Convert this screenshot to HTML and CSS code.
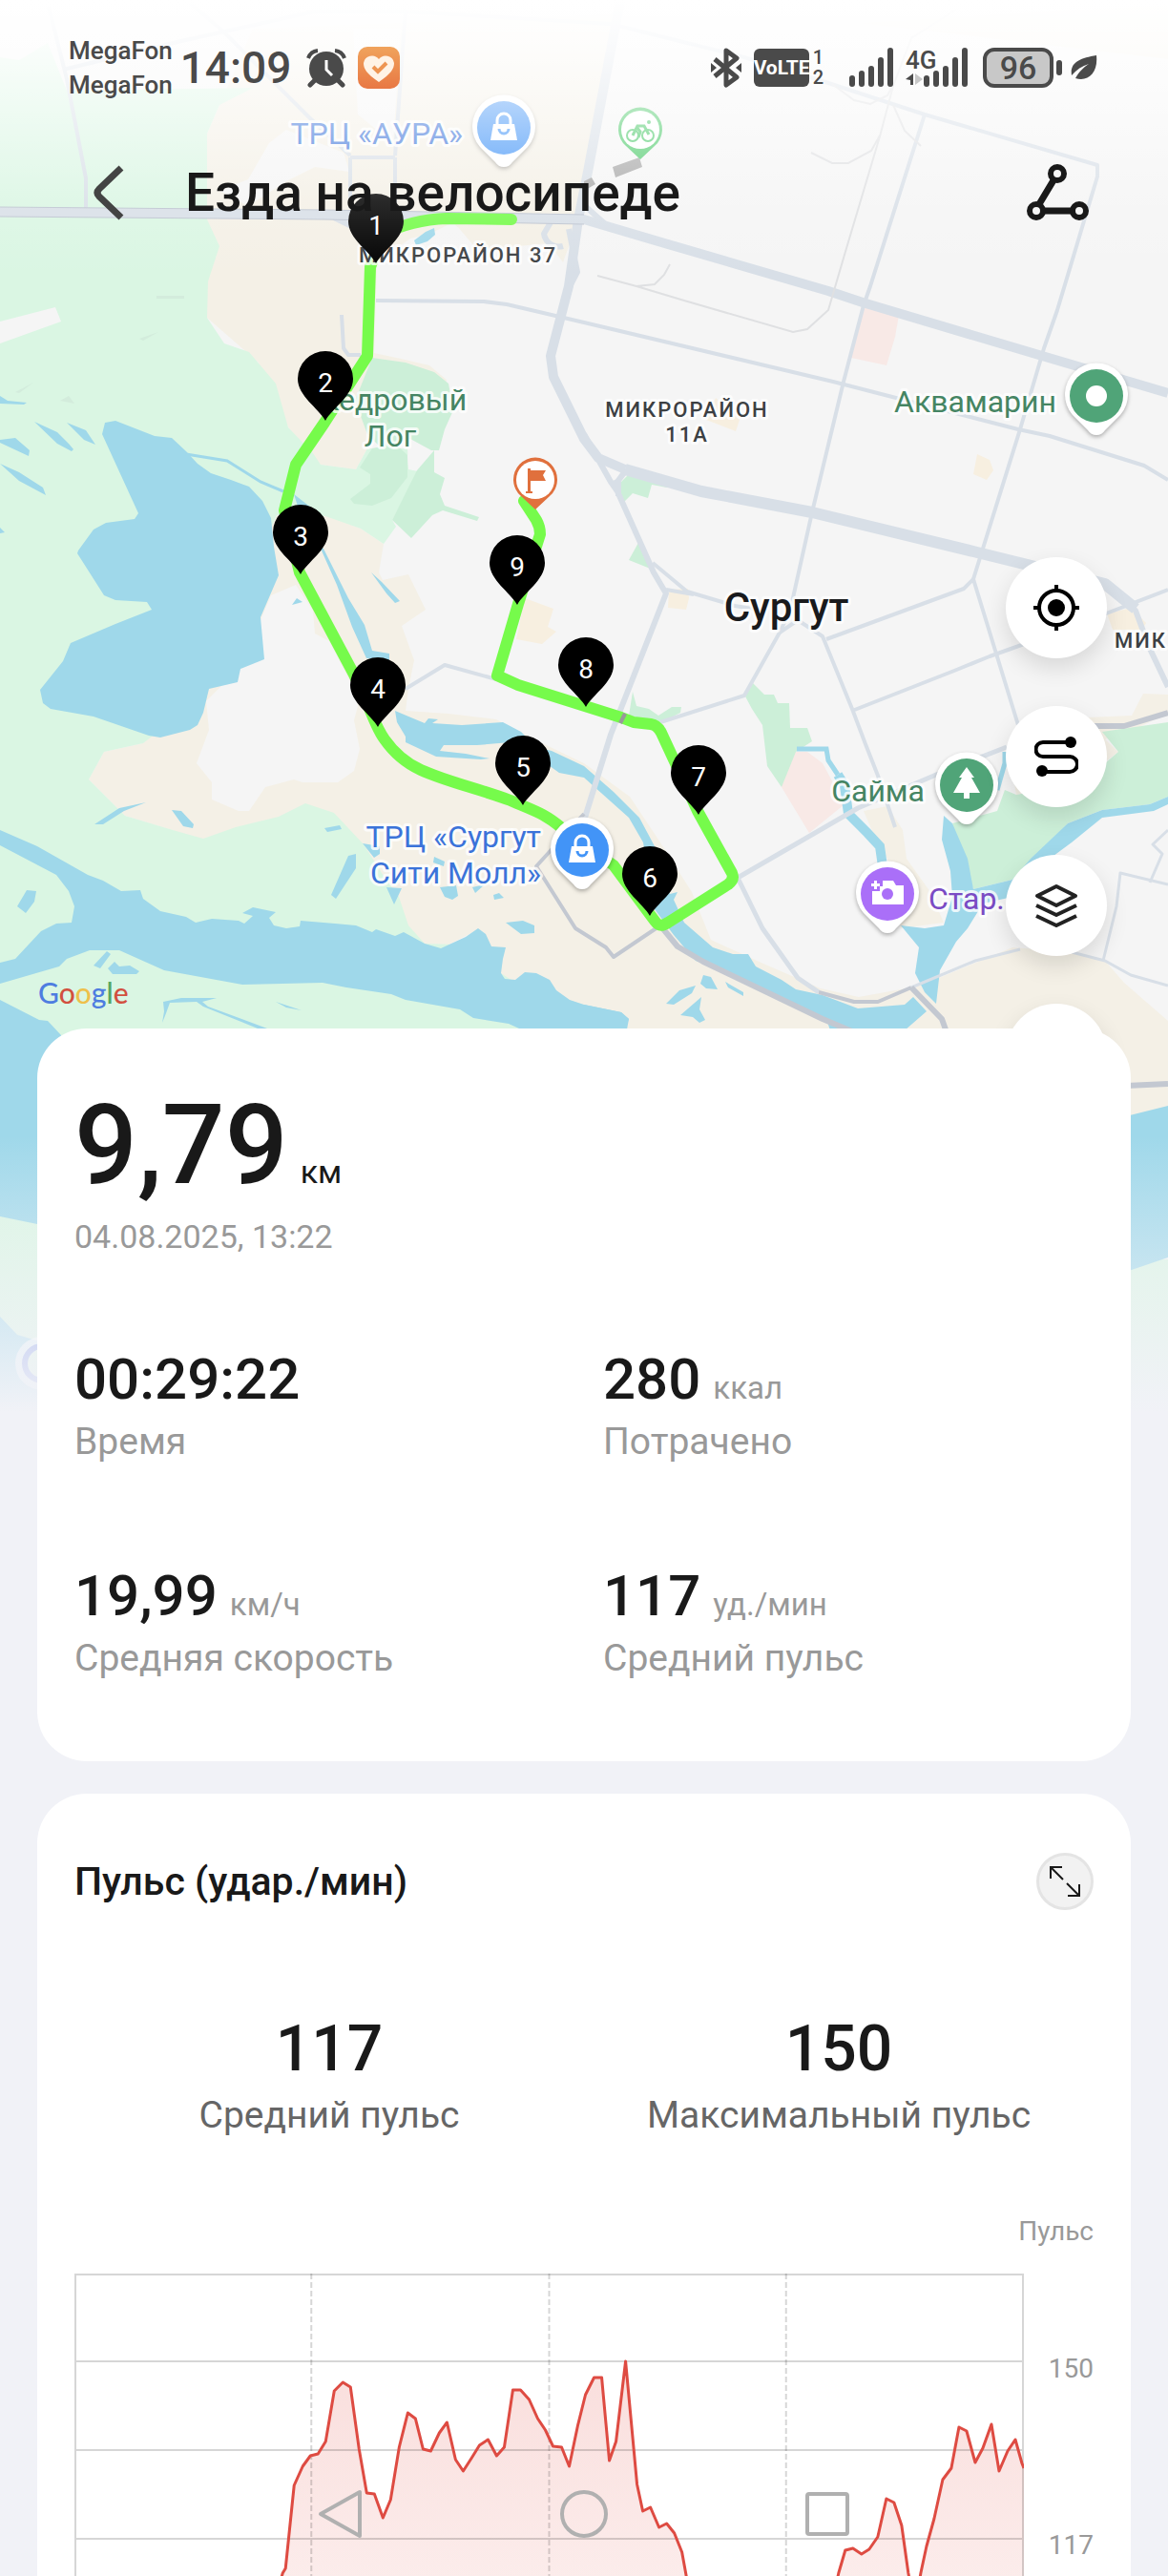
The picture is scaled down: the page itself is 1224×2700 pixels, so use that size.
FILE: index.html
```html
<!DOCTYPE html>
<html lang="ru">
<head>
    <meta charset="UTF-8">
    <meta name="viewport" content="width=device-width">
    <title>Езда на велосипеде</title>
    <link rel="stylesheet" href="styles.css">
</head>
<body>
<div class="screen">
    <div class="map">
        <svg class="map-svg" viewBox="0 0 1224 1500" preserveAspectRatio="xMidYMin slice">
            <defs>
                <path id="km" d="M0 0C-7-13-29-26-29-44A29 29 0 1 1 29-44C29-26 7-13 0 0z"/>
                <path id="poi" d="M0 41C-4 41-7 39-9 36L-25 20A33 33 0 1 1 25 20L9 36C7 39 4 41 0 41z"/>
                <path id="place" d="M0 31L-15 17A23 23 0 1 1 15 17z"/>
                <g id="bag">
                    <path d="M-11-4H11L14 13H-14z" fill="#fff"/>
                    <path d="M-7-4V-8A7 7 0 0 1 7-8V-4" fill="none" stroke="#fff" stroke-width="3"/>
                    <path d="M-5 1A5 5 0 0 0 5 1" fill="none" stroke="#4294f7" stroke-width="3"/>
                </g>
            </defs>
            <rect width="1224" height="1500" fill="#f5f5f5"/>

            <!-- land -->
            <g fill="#f4f0e6">
                <path d="M265 30L650 15 612 215 590 275 575 255 500 262 480 238 430 250 395 275 392 370 420 376 450 383 468 398 465 410 400 400 390 440 385 470 373 492 336 487 302 448 271 380 217 333 217 140z"/>
                <path d="M280 540H341L378 554 402 570 397 600 401 608 428 602 446 639 421 656 434 692 428 722 425 745 470 748 520 754 560 775 612 800 660 835 690 880 725 935 745 985 800 1010 860 1036 900 1045 955 1035 981 1052 1000 1090 560 1090 500 975 470 990 445 989 400 960 180 870 131 855 93 817 109 788 150 779 200 700z"/>
                <path d="M905 850L930 845 946 870 950 900 975 935 989 967 944 973 930 900 918 880z"/>
                <path d="M979 1027L1061 993 1123 998 1158 1007 1178 1030 1224 1070V1180H970L960 1033z"/>
                <path d="M1198 727L1224 728V747L1194 762 1158 775 1172 788 1140 812 1065 833 1058 790 1139 752 1186 750z"/>
                <path d="M900 24L1224 5V62z"/>
            </g>
            <g fill="#daf6e3">
                <path d="M0 60L20 63 50 45 70 95 265 92 230 110 217 140 217 230 230 258 218 295 217 333 235 360 261 369 289 402 302 448 328 475 336 487 373 492 385 470 427 470 428 492 438 494 411 545 415 552 402 570 378 554 341 541 290 540 200 740 159 772 150 779 109 788 93 817 131 855 181 870 213 879 247 867 292 856 320 842 350 852 381 885 400 915 418 940 428 970 445 989 480 990 540 1030 660 1090 60 1090 0 1050z"/>
                <path d="M0 1275H45V1500H0zM1180 1320H1224V1500H1180z"/>
            </g>
            <g fill="#f5f5f5">
                <path d="M284 624L310 613 328 640 330 664 345 672 370 720 375 740 371 755 377 785 371 808 354 820H317L308 817 278 825 261 850H250L222 838V820L206 800 219 765 216 735 251 700 272 690 273 650z"/>
                <path d="M0 337L58 322 64 337 0 360z"/>
                <path d="M230 200L260 188 282 150 300 136 360 160 366 180 330 175 300 190 260 216zM370 30H420L412 150 375 120z"/>
                <path d="M427 477L450 473 437 493 428 490zM430 255L475 233 500 262 440 262z"/>
            </g>
            <g fill="#ccefd8">
                <path d="M390 375L425 380 455 390 470 402 475 430 466 450 460 472 452 472 430 460 400 470 385 455 372 420z"/>
                <path d="M377 490L390 470 414 465 427 477V500L410 522 390 530 371 528 367 523 388 507V497z"/>
                <path d="M455 472V495L466 501 461 518 466 530 502 542 500 546 464 535 453 540 431 564 411 545 437 493z"/>
                <path d="M788 715L801 728H811L815 737H827L828 763H846L851 777 834 788 842 810 819 825 804 803 799 760 788 743 780 728z"/>
                <path d="M659 497H669L703 506 699 511 683 508 679 522 663 517 652 528 648 508zM670 567L684 597 659 587zM663 725L667 740 680 743 690 750 704 741H714L713 747 692 758 659 750z"/>
                <path d="M998 863L1020 932 1061 922 1119 863 1155 849 1205 843 1224 835V757L1155 767 1172 788 1158 800 1119 823 1065 833 1053 828 1045 850z"/>
            </g>
            <path d="M905 320L942 330 938 353 929 383 892 375zM834 788H846L862 800 885 843 848 873 819 825z" fill="#f8e9e6"/>
            <path d="M740 440L750 417 775 440 771 452zM1024 476L1037 482 1041 493 1034 503 1020 497zM701 618L721 617 722 627 719 639 700 637zM1160 643L1186 637 1201 653 1197 660H1166zM550 627L580 638 574 657 583 662 568 675 541 670z" fill="#f7efe0"/>
            <g fill="#d3ecdc">
                <path d="M164 310H193V313H164zM146 355L166 348 150 357zM16 411L35 401 20 412zM63 420L72 415 78 423z"/>
            </g>

            <!-- water -->
            <g fill="#9fd8ea">
                <path d="M110 443L121 441 162 457 180 459 195 473 207 486 221 496 242 503 261 510 275 525 284 543 287 573 292 603 273 647 277 691 252 701 249 715 219 722 213 747 207 760 199 765 168 773 156 771 98 751 53 743 45 737 42 723 66 693 74 674 121 654 159 639 154 631 121 629 109 624 81 580 82 577 98 555 111 548 141 544 145 538 107 455z"/>
                <path d="M0 870L39 887 92 917 108 923 127 934 147 933 150 942 168 955 195 961 205 967 222 963 250 965 256 968 265 960 254 957 265 951 289 956 282 962 287 970 300 973 314 971 315 965 351 968 373 970 390 977 394 974 414 981 423 977 445 989 462 994 488 982 501 973 509 979 515 992 530 993 527 1005 525 1020 529 1026 540 1027 550 1019 562 1020 576 1027 583 1038 597 1048 612 1053 651 1061 659 1068 655 1090 545 1090 544 1078 533 1073 496 1067 482 1058 425 1048 410 1042 363 1035 338 1030 254 1032 172 1017 125 996H94L70 1005 62 1013 0 1031V1009L16 1005 43 976 59 968 75 967 78 950 72 934 59 917 0 886z"/>
                <path d="M0 1048L41 1069 50 1070 64 1085V1290L39 1283 0 1275z"/>
                <path d="M0 1380L18 1399 45 1407V1500H0z"/>
                <path d="M1180 1170L1224 1159V1318L1180 1333z"/>
                <path d="M414 745L433 753 445 758 449 753 459 754 453 758 484 760 527 757 546 767 562 783 578 787 612 803 643 830 670 857 686 887 702 937 710 935 706 943 717 967 747 993 768 1000 784 1000 792 1013 819 1027 834 1037 862 1043 899 1057 948 1053 957 1045 971 1060 948 1080H870L866 1068 780 1027 729 1007 706 980 686 953 674 883 659 857 612 815 586 810 558 790 535 778 500 781H465L461 787 488 790 513 795 504 796 457 793 425 778V772L416 757z"/>
                <path d="M308 518L326 532 330 560 340 577 365 627 382 655 390 682 408 685V692L384 690 369 657 353 613 336 575 315 540z"/>
                <path d="M989 855L987 880 996 913 998 940 989 970 969 973 944 970 963 993 959 1020 969 1040 981 1052 985 1017 1002 987 1014 973 1030 947 1061 940 1100 900 1123 883 1155 857 1209 850 1224 843V835L1205 843 1155 849 1119 863 1080 900 1061 922 1020 932 1014 900 998 863z"/>
                <path d="M36 442L60 453 72 465 77 471 75 473 60 465zM70 443L90 451 100 466 88 461zM0 461L16 459 31 472 30 478 0 464zM0 486L20 495 45 511 48 519 20 504zM0 415L8 420 28 422 25 424 0 423zM0 553L5 558 0 559z"/>
                <path d="M99 864L125 847 153 841 130 850 108 864zM180 849L190 850 203 864 202 868 192 866zM340 868L356 865 358 869 343 872zM365 897L373 895V910L352 942 347 938zM380 884L398 887V895L392 899zM28 933L38 934 36 945 27 957 18 950zM112 997L116 1000 105 1015 98 1012z"/>
                <path d="M113 1015L120 1008 125 1013 136 1012 146 1018 143 1021H118zM171 1050L190 1046H227L212 1050 218 1055 280 1078H270L213 1055 206 1050 178 1051 174 1062 170 1072 172 1060zM289 1050L316 1059 300 1056z"/>
                <path d="M455 898L466 903 465 908 454 904zM461 930L478 928 480 939 474 943 466 940zM405 930L421 931 413 948zM517 938L523 936 528 941 518 943zM530 967L548 965 560 970V978L546 979zM495 930L508 927 498 936z"/>
                <path d="M737 1022L745 1024 752 1037 740 1036 734 1031zM760 1029L779 1040V1044L763 1035zM698 1052L712 1038 729 1033 725 1041 706 1053zM713 1064L735 1045 733 1058 739 1069 733 1072 726 1066z"/>
                <path d="M612 1053L651 1061 659 1068 655 1080H600z"/>
                <path d="M306 634L311 627 317 631zM389 600L400 610 419 630 414 632 405 622z"/>
                <path d="M434 252L446 243 455 239 456 246 448 253 436 257z"/>
            </g>
            <g fill="none" stroke="#9fd8ea">
                <path d="M195 476L238 483 273 505 297 515" stroke-width="3"/>
                <path d="M835 785H866L868 797 878 812" stroke-width="5"/>
                <path d="M878 812L885 823 889 853 909 873 922 887 925 908" stroke-width="10"/>
                <path d="M1053 788V800L1045 828" stroke-width="5"/>
            </g>

            <!-- roads -->
            <g fill="none" stroke="#d8dfe7" stroke-width="4" stroke-linejoin="round">
                <path d="M51 7L70 83 90 187V218M199 3L234 33 324 123 367 163M425 10L414 163M367 165H414M367 165V218M414 165V218M66 73L190 43 330 12H425L640 25 780 60 862 85 969 120 1150 173V185L1108 325 1094 365 1069 450 1020 607 1067 760" />
                <path d="M969 120L912 300 905 320 884 400 851 537 828 640 817 663 780 729 692 757"/>
                <path d="M394 315L507 316 531 319 612 338 873 400 1067 450 1100 457 1199 488 1224 503"/>
                <path d="M817 663L836 650 862 667 893 743 907 780 920 813 938 867M866 670L1010 617 1020 607M893 745L1000 703 1037 688 1115 660 1224 618" />
                <path d="M684 590L720 620 770 635 800 640M698 618L727 623M425 722L466 697 520 712M358 330L360 365 365 372H378"/>
                <path d="M773 920L799 973 836 1025 858 1040M773 920L899 847 981 812 1055 783" stroke-width="5"/>
                <path d="M955 1035L1022 1007 1069 995M1123 998L1158 1007 1185 1022 1224 1033M1156 1007L1170 950 1174 915 1224 927M1224 870L1208 885 1218 895 1205 925" stroke-width="3"/>
                <path d="M612 455L640 505 647 515 685 600 698 622 640 770 612 860" stroke-width="6"/>
                <path d="M640 507C652 507 648 495 662 491M648 505V520M1165 615L1190 640 1205 680 1224 720" stroke-width="6"/>
                <path d="M650 0L616 180 606 230 596 300 577 373 580 395 612 460 627 480 655 492" stroke-width="10"/>
                <path d="M655 492L735 515 851 537 1020 578 1085 594 1158 612 1190 638" stroke-width="12"/>
                <path d="M0 222L340 225 612 230 700 256 868 305 904 317 1082 370 1224 412" stroke-width="10"/>
                <path d="M350 228L395 250M580 228L570 245A16 16 0 0 0 590 258M612 215L640 240M596 240L605 285 592 310" stroke-width="6"/>
            </g>
            <path d="M0 217L340 220 612 225M0 227L340 230 612 235" fill="none" stroke="#bcc3cf"/>
            <g fill="none" stroke="#dfe0e2" stroke-width="2">
                <path d="M626 289L667 300 717 315 831 348 846 345 868 325 885 267 922 143 936 90 955 40 1002 10M850 160L872 171H889L913 158 922 142M936 110L948 137 965 153M702 277L696 288 686 298 667 300M872 88L895 105 912 109 930 100 938 85"/>
            </g>
            <g fill="none" stroke="#c3c8d1" stroke-width="4" stroke-linejoin="round">
                <path d="M612 853L562 908 603 973 635 993 643 1003 692 970M858 1040L895 1050H920L955 1035"/>
                <path d="M692 970L710 992 737 1008 862 1068 900 1084M955 1035L987 1068 992 1082M1143 761H1178L1224 747M1180 1138L1224 1136" stroke-width="6"/>
            </g>

            <path d="M612 190L620 186 624 193 612 200zM642 175L670 165 673 175 645 186z" fill="#a8a8a8"/>

            <!-- track -->
            <path class="track" d="M536 230L468 229C440 230 420 236 400 246L388 280 385 373 340 443 310 487 298 535 314 600 371 707C390 745 392 760 403 775 415 792 430 802 441 807 470 820 500 826 535 839 560 850 570 852 589 868L643 907 686 965C691 972 695 970 700 967L763 927Q770 922 767 915L731 850 693 768Q689 760 682 759L664 757 651 752 543 718 521 708 543 633 566 560Q566 552 562 545L549 525"/>
            <path d="M655 748L650 758" stroke="#999" stroke-width="4"/>

            <!-- labels -->
            <g class="label blue" text-anchor="end">
                <text x="485" y="151">ТРЦ «АУРА»</text>
                <text x="567" y="888">ТРЦ «Сургут</text>
                <text x="567" y="926">Сити Молл»</text>
            </g>
            <g class="label green">
                <text x="412" y="430" text-anchor="middle">Кедровый</text>
                <text x="409" y="468" text-anchor="middle">Лог</text>
                <text x="1107" y="432" text-anchor="end">Аквамарин</text>
                <text x="969" y="840" text-anchor="end">Сайма</text>
            </g>
            <text class="label purple" x="973" y="953">Стар.</text>
            <g class="label district">
                <text x="376" y="275">МИКРОРАЙОН 37</text>
                <text x="720" y="437" text-anchor="middle">МИКРОРАЙОН</text>
                <text x="720" y="463" text-anchor="middle">11А</text>
                <text x="1168" y="679">МИК</text>
            </g>
            <text class="label city" x="824" y="651" text-anchor="middle">Сургут</text>
            <text class="google" x="40" y="1052"><tspan fill="#4e7de0">G</tspan><tspan fill="#d2503f">o</tspan><tspan fill="#eec04b">o</tspan><tspan fill="#4e7de0">g</tspan><tspan fill="#56a662">l</tspan><tspan fill="#d2503f">e</tspan></text>

            <!-- places -->
            <g class="poi" transform="translate(528 134)"><use href="#poi" fill="#fff"/><circle r="28" fill="#4294f7"/><use href="#bag"/></g>
            <g class="poi" transform="translate(610 891)"><use href="#poi" fill="#fff"/><circle r="28" fill="#4294f7"/><use href="#bag"/></g>
            <g class="poi" transform="translate(1149 415)"><use href="#poi" fill="#fff"/><circle r="28" fill="#50a478"/><circle r="11" fill="#fff"/></g>
            <g class="poi" transform="translate(1013 823)"><use href="#poi" fill="#fff"/><circle r="28" fill="#50a478"/><path d="M0-19L8-8H5L14 8H3V14H-3V8H-14L-5-8H-8z" fill="#fff"/></g>
            <g class="poi" transform="translate(930 937)"><use href="#poi" fill="#fff"/><circle r="28" fill="#aa6ff8"/><path d="M-16-3H-8V-8H-5V-14H6L9-9H17V11H-16zM-14-14H-11V-11H-8V-8H-11V-5H-14V-8H-17V-11H-14z" fill="#fff"/><circle r="6" fill="#aa6ff8"/></g>
            <g transform="translate(44 1429)"><circle r="28" fill="#fff" fill-opacity=".7"/><circle r="18" fill="#daf6e3" stroke="#7b92e8" stroke-width="6"/></g>

            <g transform="translate(671 136)">
                <use href="#place" fill="#4cc969"/><circle r="20" fill="#fff"/>
                <g fill="none" stroke="#4cc969" stroke-width="2"><circle cx="-8" cy="6" r="6"/><circle cx="8" cy="6" r="6"/><path d="M-8 6L-3-4H4L9 5M-4-3L0 2-2 8" stroke-width="3"/></g>
                <circle cx="9" cy="-8" r="2" fill="#4cc969"/>
            </g>
            <g transform="translate(561 503)">
                <use href="#place" fill="#e0703d"/><circle r="20" fill="#fff"/>
                <path d="M-8-12H-5V-10H11L8-5 11 1H-5V12H-3V14H-10V12H-8z" fill="#e0703d"/>
            </g>

            <!-- kilometres -->
            <g class="km">
                <g transform="translate(394 276)"><use href="#km"/><text y="-30">1</text></g>
                <g transform="translate(341 441)"><use href="#km"/><text y="-30">2</text></g>
                <g transform="translate(315 602)"><use href="#km"/><text y="-30">3</text></g>
                <g transform="translate(396 762)"><use href="#km"/><text y="-30">4</text></g>
                <g transform="translate(548 844)"><use href="#km"/><text y="-30">5</text></g>
                <g transform="translate(681 960)"><use href="#km"/><text y="-30">6</text></g>
                <g transform="translate(732 854)"><use href="#km"/><text y="-30">7</text></g>
                <g transform="translate(614 741)"><use href="#km"/><text y="-30">8</text></g>
                <g transform="translate(542 634)"><use href="#km"/><text y="-30">9</text></g>
            </g>
        </svg>
    </div>

    <div class="status">
        <div class="carrier"><span>MegaFon</span><span>MegaFon</span></div>
        <span class="clock">14:09</span>
        <svg class="alarm" width="42" height="42" viewBox="0 0 42 42">
            <circle cx="21" cy="22" r="18" fill="#4a4a4a"/>
            <path d="M8 35L4 39M34 35L38 39" stroke="#4a4a4a" stroke-width="5" stroke-linecap="round"/>
            <path d="M2 11A12 12 0 0 1 12 3M40 11A12 12 0 0 0 30 3" fill="none" stroke="#4a4a4a" stroke-width="4"/>
            <path d="M21 13V23L27 29" fill="none" stroke="#fff" stroke-width="3"/>
        </svg>
        <svg width="44" height="44" viewBox="0 0 44 44">
            <defs><linearGradient id="app" x2="0" y2="1"><stop stop-color="#f0a35c"/><stop offset="1" stop-color="#e87844"/></linearGradient></defs>
            <rect width="44" height="44" rx="10" fill="url(#app)"/>
            <path d="M22 37C9 28 6 23 6 17A9 9 0 0 1 22 13A9 9 0 0 1 38 17C38 23 35 28 22 37z" fill="#fff3e6"/>
            <path d="M16 21L21 26 30 17" fill="none" stroke="#ee9552" stroke-width="4"/>
        </svg>
        <div class="status-right">
            <svg width="34" height="42" viewBox="0 0 34 42"><path d="M5 12L28 31 17 39V3L28 11 5 30" fill="none" stroke="#4a4a4a" stroke-width="5" stroke-linejoin="round"/><path d="M1 16L7 21 1 26zM33 16L27 21 33 26z" fill="#4a4a4a"/></svg>
            <span class="volte">VoLTE</span>
            <span class="sim"><span>1</span><span>2</span></span>
            <svg class="bars" width="48" height="42" viewBox="0 0 48 42"><path d="M4 32V38M14 27V38M24 22V38M34 13V38M44 3V38" stroke="#4a4a4a" stroke-width="6" stroke-linecap="round"/></svg>
            <span class="net">4G<svg width="18" height="14" viewBox="0 0 18 14"><path d="M0 7L8 1V13H5V8z" fill="#4a4a4a"/><path d="M10 1L18 7 10 13z" fill="#c8c8c8"/></svg></span>
            <svg width="48" height="42" viewBox="0 0 48 42"><path d="M4 32V38M14 27V38M24 22V38M34 13V38M44 3V38" stroke="#4a4a4a" stroke-width="6" stroke-linecap="round"/></svg>
            <span class="battery">96</span>
            <svg width="28" height="28" viewBox="0 0 28 28"><path d="M1 22C-1 8 10 4 27 1C29 20 18 29 5 25C9 18 13 14 19 10C12 12 6 16 1 22z" fill="#4a4a4a"/></svg>
        </div>
    </div>

    <header class="title-bar">
        <button class="icon-btn back" type="button" aria-label="Назад">
            <svg width="34" height="60" viewBox="0 0 34 60"><path d="M29 4L6 26Q2 30 6 34L29 56" fill="none" stroke="#444" stroke-width="7"/></svg>
        </button>
        <h1>Езда на велосипеде</h1>
        <button class="icon-btn" type="button" aria-label="Маршрут">
            <svg width="68" height="62" viewBox="0 0 68 62" fill="none" stroke="#191919" stroke-width="6"><path d="M30 18L15 43M20 50H48" stroke-width="7"/><circle cx="34" cy="11" r="7"/><circle cx="12" cy="50" r="7"/><circle cx="57" cy="50" r="7"/></svg>
        </button>
    </header>

    <div class="map-tools">
        <button type="button" aria-label="Моё местоположение">
            <svg width="50" height="50" viewBox="0 0 50 50" fill="none" stroke="#000" stroke-width="4"><circle cx="25" cy="25" r="18"/><circle cx="25" cy="25" r="9" fill="#000" stroke="none"/><path d="M25 1V8M25 42V49M1 25H8M42 25H49"/></svg>
        </button>
        <button type="button" aria-label="Трек">
            <svg width="46" height="46" viewBox="0 0 46 46" fill="none" stroke="#000" stroke-width="4"><path d="M38 8H9A7 7 0 0 0 9 23H37A8 8 0 0 1 37 39H8"/><circle cx="38" cy="8" r="6" fill="#000" stroke="none"/><circle cx="8" cy="38" r="6" fill="#000" stroke="none"/></svg>
        </button>
        <button type="button" aria-label="Слои">
            <svg width="48" height="48" viewBox="0 0 48 48" fill="none" stroke="#222" stroke-width="4" stroke-linejoin="round"><path d="M24 4L44 14 24 24 4 14zM3 24L24 34 45 24M3 35L24 45 45 35"/></svg>
        </button>
        <button type="button" aria-label="Ещё"></button>
    </div>

    <main class="sheet">
        <section class="card">
            <p class="distance">9,79<small>км</small></p>
            <p class="date">04.08.2025, 13:22</p>
            <div class="stats">
                <div>
                    <p class="value">00:29:22</p>
                    <p class="name">Время</p>
                </div>
                <div>
                    <p class="value">280<small>ккал</small></p>
                    <p class="name">Потрачено</p>
                </div>
                <div>
                    <p class="value">19,99<small>км/ч</small></p>
                    <p class="name">Средняя скорость</p>
                </div>
                <div>
                    <p class="value">117<small>уд./мин</small></p>
                    <p class="name">Средний пульс</p>
                </div>
            </div>
        </section>

        <section class="card pulse">
            <div class="card-head">
                <h2>Пульс (удар./мин)</h2>
                <button class="expand" type="button" aria-label="Развернуть">
                    <svg width="36" height="36" viewBox="0 0 36 36" fill="none" stroke="#191919" stroke-width="2"><path d="M3 15V3H15M3 3L16 16M33 21V33H21M33 33L20 20"/></svg>
                </button>
            </div>
            <div class="summary">
                <div>
                    <p class="big">117</p>
                    <p class="name">Средний пульс</p>
                </div>
                <div>
                    <p class="big">150</p>
                    <p class="name">Максимальный пульс</p>
                </div>
            </div>
            <p class="axis-title">Пульс</p>
            <div class="chart">
                <svg viewBox="0 0 994 360" preserveAspectRatio="none">
                    <defs><linearGradient id="fill" x2="0" y2="1"><stop stop-color="#e0483e" stop-opacity=".18"/><stop offset="1" stop-color="#e0483e" stop-opacity=".09"/></linearGradient></defs>
                    <path d="M205 360L218 314 221 309 230 222 239 202 247 191 255 189 263 176 272 123 281 114 289 119 298 184 306 230 314 231 323 256 331 237 340 182 349 146 357 152 365 184 373 186 382 167 390 156 399 195 407 207 416 193 424 180 433 174 442 191 450 182 459 122 467 122 476 132 485 152 493 164 501 181 510 182 518 202 527 159 535 127 544 109 552 109 560 196 567 176 577 92 589 221 595 249 603 245 612 266 620 262 628 272 636 292 640 314 648 360zM790 360L800 314 807 290 815 288 824 294 832 289 841 276 850 236 858 240 866 264 873 314 880 350 886 314 892 286 900 257 909 216 918 204 926 161 934 165 943 198 951 183 960 158 968 207 977 186 985 174 992 199 994 204V360z" fill="url(#fill)"/>
                    <g class="grid"><path d="M1 360V1H993V360M0 92H994M0 185H994M0 278H994"/><path d="M248 0V360M497 0V360M745 0V360" stroke-dasharray="6 3"/></g>
                    <path class="line" d="M205 360L218 314 221 309 230 222 239 202 247 191 255 189 263 176 272 123 281 114 289 119 298 184 306 230 314 231 323 256 331 237 340 182 349 146 357 152 365 184 373 186 382 167 390 156 399 195 407 207 416 193 424 180 433 174 442 191 450 182 459 122 467 122 476 132 485 152 493 164 501 181 510 182 518 202 527 159 535 127 544 109 552 109 560 196 567 176 577 92 589 221 595 249 603 245 612 266 620 262 628 272 636 292 640 314 648 360M790 360L800 314 807 290 815 288 824 294 832 289 841 276 850 236 858 240 866 264 873 314 880 350 886 314 892 286 900 257 909 216 918 204 926 161 934 165 943 198 951 183 960 158 968 207 977 186 985 174 992 199 994 204"/>
                </svg>
                <div class="axis"><span>150</span><span>117</span></div>
            </div>
        </section>
    </main>

    <nav class="sys-nav">
        <button type="button" aria-label="Назад"><svg width="54" height="54" viewBox="0 0 54 54"><path d="M47 4V50L6 27z"/></svg></button>
        <button type="button" aria-label="Домой"><svg width="54" height="54" viewBox="0 0 54 54"><circle cx="27" cy="27" r="23"/></svg></button>
        <button type="button" aria-label="Недавние"><svg width="54" height="54" viewBox="0 0 54 54"><rect x="6" y="6" width="42" height="42" rx="2"/></svg></button>
    </nav>
</div>
</body>
</html>
```
FILE: styles.css
```css
*{margin:0;padding:0;box-sizing:border-box;}
body{
    background:#f1f2f7;
    color:#191919;
    font-family:Roboto,"Noto Sans",sans-serif;
}
button{
    border:0;
    background:none;
    cursor:pointer;
}
svg{display:block;}
.screen{
    position:relative;
    height:100vh;
    overflow:hidden;
}

/* map */
.map{
    position:absolute;
    top:0;
    left:0;
    right:0;
    height:1500px;
}
.map-svg{
    width:100%;
    height:100%;
}
.map:after{
    content:"";
    position:absolute;
    inset:0;
    background:
        linear-gradient(#fff 0,rgba(255,255,255,.85) 50px,rgba(255,255,255,.5) 130px,rgba(255,255,255,.16) 210px,rgba(255,255,255,0) 290px),
        linear-gradient(rgba(241,242,247,0) 1190px,#f1f2f7 1480px);
}
.track{
    fill:none;
    stroke:#76fb4b;
    stroke-width:12px;
    stroke-linecap:round;
    stroke-linejoin:round;
}
.label{
    font-size:32px;
    paint-order:stroke;
    stroke:#fff;
    stroke-opacity:.8;
    stroke-width:6px;
    stroke-linejoin:round;
}
.blue{fill:#3b73d9;}
.green{fill:#458563;}
.purple{fill:#7a4bc4;}
.district{
    font-size:22px;
    font-weight:500;
    letter-spacing:2px;
    fill:#3c4043;
}
.city{
    font-size:42px;
    font-weight:500;
    fill:#191a1c;
}
.google{
    font-family:Lato,sans-serif;
    font-size:30px;
    font-weight:500;
}
.poi use:first-child{filter:drop-shadow(0 2px 2px rgba(0,0,0,.3));}
.km text{
    fill:#fff;
    font-size:28px;
    text-anchor:middle;
}

/* status bar */
.status{
    position:relative;
    display:flex;
    align-items:center;
    height:142px;
    padding:0 74px 0 72px;
    color:#4a4a4a;
    font-weight:500;
}
.carrier{
    display:flex;
    flex-direction:column;
    font-size:26px;
    line-height:36px;
}
.clock{
    margin:0 16px 0 8px;
    font-size:46px;
}
.alarm{margin-right:12px;}
.status-right{
    display:flex;
    align-items:center;
    margin-left:auto;
}
.volte{
    width:58px;
    margin:0 4px 0 12px;
    border-radius:6px;
    background:#4a4a4a;
    color:#fff;
    font-size:21px;
    font-weight:700;
    line-height:40px;
    text-align:center;
}
.sim{
    display:flex;
    flex-direction:column;
    font-size:20px;
    line-height:21px;
}
.bars{margin:0 12px 0 26px;}
.net{
    width:18px;
    height:42px;
    font-size:26px;
    line-height:26px;
}
.battery{
    position:relative;
    width:74px;
    margin:0 18px 0 15px;
    border:4px solid #4a4a4a;
    border-radius:12px;
    background:#c8c8c8;
    font-size:34px;
    line-height:34px;
    text-align:center;
}
.battery:after{
    content:"";
    position:absolute;
    right:-13px;
    top:9px;
    width:6px;
    height:16px;
    border-radius:3px;
    background:#4a4a4a;
}

/* title */
.title-bar{
    position:relative;
    display:flex;
    align-items:center;
    height:120px;
    padding:0 82px 0 98px;
}
.title-bar h1{
    flex:1;
    margin-left:62px;
    font-size:55px;
    font-weight:500;
}

.map-tools{
    position:absolute;
    top:584px;
    right:64px;
    display:flex;
    flex-direction:column;
    gap:50px;
}
.map-tools button{
    display:flex;
    align-items:center;
    justify-content:center;
    width:106px;
    height:106px;
    border-radius:50%;
    background:#fff;
    box-shadow:0 10px 24px rgba(0,0,0,.12);
}

/* cards */
.sheet{
    position:relative;
    display:flex;
    flex-direction:column;
    gap:34px;
    padding:816px 39px 0;
}
.card{
    padding:62px 39px 84px;
    border-radius:52px;
    background:#fff;
}
.distance{
    font-size:116px;
    font-weight:500;
    line-height:120px;
}
.distance small,
.value small{
    margin-left:13px;
    font-size:34px;
    font-weight:400;
    line-height:1;
}
.date{
    margin-top:14px;
    color:#999;
    font-size:34px;
    line-height:44px;
}
.stats{
    display:grid;
    grid-template-columns:1fr 1fr;
    gap:102px 40px;
    margin-top:92px;
}
.value{
    font-size:60px;
    font-weight:500;
    line-height:72px;
}
.value small{
    color:#999;
    font-size:33px;
}
.name{
    margin-top:5px;
    color:#999;
    font-size:39px;
    line-height:48px;
}
.card-head{
    display:flex;
    align-items:center;
    justify-content:space-between;
}
.card-head h2{
    font-size:41px;
    font-weight:500;
}
.expand{
    display:flex;
    align-items:center;
    justify-content:center;
    width:60px;
    height:60px;
    border:3px solid #e4e4e4;
    border-radius:50%;
    background:#f2f2f2;
}
.summary{
    display:grid;
    grid-template-columns:1fr 1fr;
    margin-top:106px;
    text-align:center;
}
.big{
    font-size:66px;
    font-weight:500;
    line-height:80px;
}
.summary .name{color:#666;}
.axis-title{
    margin-top:80px;
    color:#999;
    font-size:28px;
    line-height:36px;
    text-align:right;
}
.chart{
    display:flex;
    margin-top:26px;
}
.chart svg{
    flex:1;
    min-width:0;
    height:360px;
}
.grid{
    fill:none;
    stroke:#000;
    stroke-opacity:.16;
    stroke-width:2px;
}
.line{
    fill:none;
    stroke:#de4b42;
    stroke-width:3px;
    stroke-linejoin:round;
}
.axis{
    display:flex;
    flex-direction:column;
    gap:149px;
    width:73px;
    padding-top:82px;
    color:#999;
    font-size:28px;
    line-height:36px;
    text-align:right;
}

/* system buttons */
.sys-nav{
    position:fixed;
    left:0;
    right:0;
    bottom:38px;
    display:flex;
    justify-content:center;
    gap:201px;
}
.sys-nav svg{
    fill:none;
    stroke:#b0b0b0;
    stroke-width:4px;
    stroke-linejoin:round;
}
```
